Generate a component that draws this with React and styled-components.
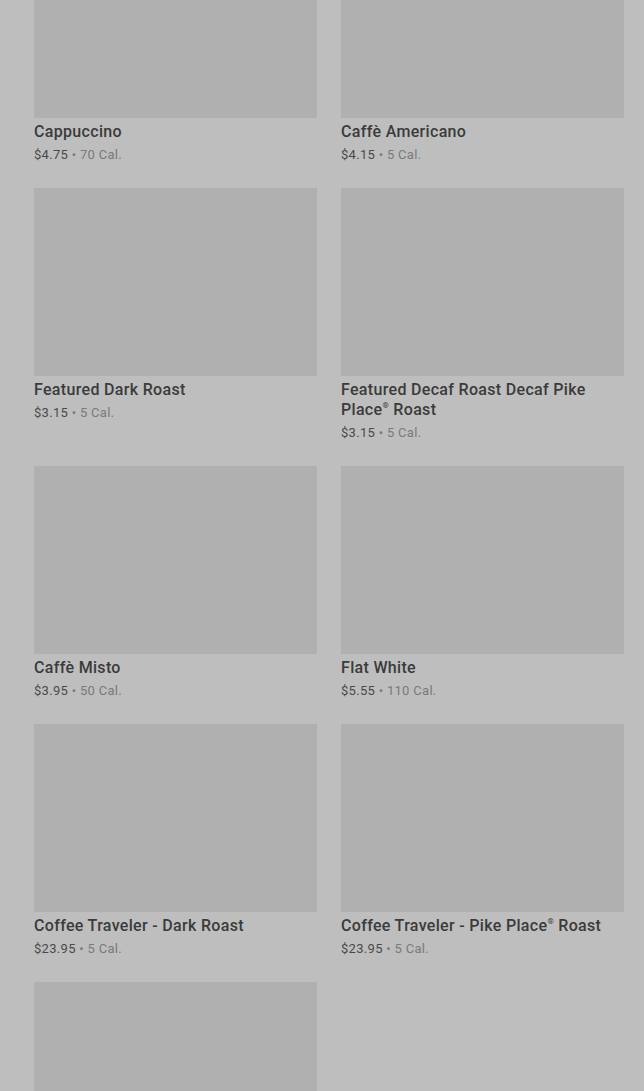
import React from 'react';
import styled, { createGlobalStyle } from 'styled-components';

const GlobalStyle = createGlobalStyle`
  html, body {
    margin: 0;
    padding: 0;
    background: #bebebe;
    overflow: hidden;
  }
  body {
    font-family: Roboto, "Liberation Sans", sans-serif;
  }
`;

const Page = styled.div`
  height: 1091px;
  overflow: hidden;
  padding: 0 20px 0 34px;
  background: #bebebe;
`;

const Grid = styled.div`
  display: grid;
  grid-template-columns: 283px 283px;
  column-gap: 24px;
  row-gap: 23px;
  margin-top: -70px;
  align-items: start;
`;

const Card = styled.div`
  display: flex;
  flex-direction: column;
`;

const Thumb = styled.div`
  height: 188px;
  background: #b0b0b0;
`;

const Info = styled.div`
  padding-top: 4px;
`;

const Title = styled.div`
  font-size: 16px;
  line-height: 20px;
  font-weight: 500;
  color: #3b3b3b;
  letter-spacing: 0.32px;
`;

const Reg = styled.span`
  display: inline-block;
  font-size: 8px;
  line-height: 8px;
  vertical-align: top;
  margin-top: 2px;
`;

const Meta = styled.div`
  margin-top: 3px;
  font-size: 13px;
  line-height: 20px;
  color: #7a7a7a;
  letter-spacing: 0.3px;
`;

const Price = styled.span`
  color: #4a4a4a;
`;

const items = [
  { name: 'Cappuccino', price: '$4.75', cal: '70 Cal.' },
  { name: 'Caffè Americano', price: '$4.15', cal: '5 Cal.' },
  { name: 'Featured Dark Roast', price: '$3.15', cal: '5 Cal.' },
  { name: 'Featured Decaf Roast Decaf Pike Place® Roast', price: '$3.15', cal: '5 Cal.' },
  { name: 'Caffè Misto', price: '$3.95', cal: '50 Cal.' },
  { name: 'Flat White', price: '$5.55', cal: '110 Cal.' },
  { name: 'Coffee Traveler - Dark Roast', price: '$23.95', cal: '5 Cal.' },
  { name: 'Coffee Traveler - Pike Place® Roast', price: '$23.95', cal: '5 Cal.' },
  { name: 'Coffee Traveler - Decaf', price: '$23.95', cal: '5 Cal.' },
];

// the ® mark sits raised and small, as on the menu
const renderName = (name) =>
  name.split('®').map((part, i, arr) => (
    <React.Fragment key={i}>
      {part}
      {i < arr.length - 1 && <Reg>®</Reg>}
    </React.Fragment>
  ));

export default function App() {
  return (
    <Page>
      <GlobalStyle />
      <Grid>
        {items.map((item, i) => (
          <Card key={i}>
            <Thumb />
            {i < 8 && (
              <Info>
                <Title>{renderName(item.name)}</Title>
                <Meta>
                  <Price>{item.price}</Price> • {item.cal}
                </Meta>
              </Info>
            )}
          </Card>
        ))}
      </Grid>
    </Page>
  );
}
